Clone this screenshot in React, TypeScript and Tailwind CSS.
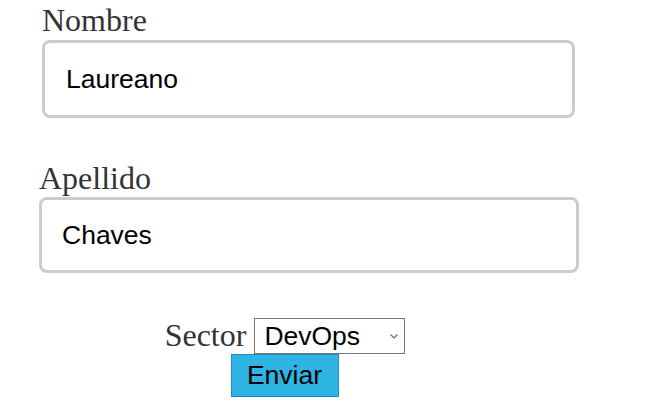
import React from "react";

export default function App() {
  return (
    <div className="w-[655px] h-[406px] bg-white overflow-hidden">
      <form className="w-[570px] flex flex-col" onSubmit={(e) => e.preventDefault()}>
        <label className="ml-[42px] mt-[2px] h-[38px] text-[32px] leading-[37px] text-[#333] font-['Liberation_Serif',serif]">
          Nombre
        </label>
        <input
          defaultValue="Laureano"
          className="ml-[42px] w-[533px] h-[78px] border-[3px] border-[#cccccc] rounded-[8px] pl-[21px] text-[26.5px] text-black font-['Liberation_Sans',Arial,sans-serif] outline-none"
        />
        <label className="ml-[39px] mt-[42px] h-[37px] text-[32px] leading-[37px] text-[#333] font-['Liberation_Serif',serif]">
          Apellido
        </label>
        <input
          defaultValue="Chaves"
          className="ml-[39px] w-[540px] h-[76px] border-[3px] border-[#cccccc] rounded-[8px] pl-[20px] text-[26.5px] text-black font-['Liberation_Sans',Arial,sans-serif] outline-none"
        />
        <div className="mt-[44px] flex flex-col items-center">
          <div className="flex items-end gap-[8px]">
            <span className="text-[32px] leading-[37px] text-[#333] font-['Liberation_Serif',serif]">
              Sector
            </span>
            <div className="relative">
              <select
                defaultValue="DevOps"
                className="appearance-none block w-[151px] h-[36px] border border-[#767676] bg-white pl-[9px] py-0 leading-[34px] text-[26.5px] text-black font-['Liberation_Sans',Arial,sans-serif]"
              >
                <option>DevOps</option>
                <option>Desarrollo</option>
                <option>QA</option>
              </select>
              <svg
                className="absolute right-[7px] top-[16px] pointer-events-none"
                width="8"
                height="5"
                viewBox="0 0 8 5"
              >
                <path d="M0.5 0.5 L4 4 L7.5 0.5" fill="none" stroke="#6b6b6b" strokeWidth="1.2" />
              </svg>
            </div>
          </div>
          <button
            type="submit"
            className="w-[108px] h-[43px] bg-[#2fb3e3] border border-[#1a8fc5] text-[26.5px] text-black font-['Liberation_Sans',Arial,sans-serif] mr-[1px]"
          >
            Enviar
          </button>
        </div>
      </form>
    </div>
  );
}
